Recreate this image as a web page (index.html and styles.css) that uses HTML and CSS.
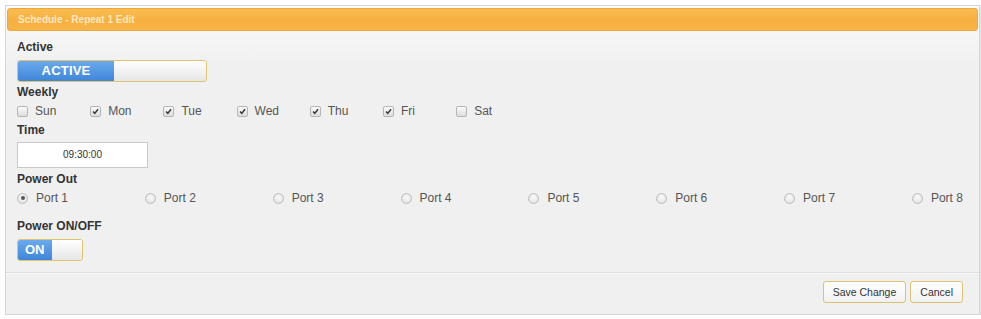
FILE: index.html
```html
<!DOCTYPE html>
<html>
<head>
<meta charset="utf-8">
<link rel="stylesheet" href="styles.css">
</head>
<body>
<div class="panel">
  <div class="header">Schedule - Repeat 1 Edit</div>
  <div class="body">
    <div class="label first">Active</div>
    <div class="toggle wide"><span class="on">ACTIVE</span><span class="off"></span></div>

    <div class="label weekly">Weekly</div>
    <div class="days">
      <label class="item"><span class="cb"></span>Sun</label>
      <label class="item"><span class="cb checked"><svg viewBox="0 0 11 11"><path d="M2.5 5.6 L4.6 7.8 L8.6 2.8" /></svg></span>Mon</label>
      <label class="item"><span class="cb checked"><svg viewBox="0 0 11 11"><path d="M2.5 5.6 L4.6 7.8 L8.6 2.8" /></svg></span>Tue</label>
      <label class="item"><span class="cb checked"><svg viewBox="0 0 11 11"><path d="M2.5 5.6 L4.6 7.8 L8.6 2.8" /></svg></span>Wed</label>
      <label class="item"><span class="cb checked"><svg viewBox="0 0 11 11"><path d="M2.5 5.6 L4.6 7.8 L8.6 2.8" /></svg></span>Thu</label>
      <label class="item"><span class="cb checked"><svg viewBox="0 0 11 11"><path d="M2.5 5.6 L4.6 7.8 L8.6 2.8" /></svg></span>Fri</label>
      <label class="item"><span class="cb"></span>Sat</label>
    </div>

    <div class="label timelabel">Time</div>
    <div class="time">09:30:00</div>

    <div class="label powerout">Power Out</div>
    <div class="ports">
      <label class="port"><span class="radio checked"></span>Port 1</label>
      <label class="port"><span class="radio"></span>Port 2</label>
      <label class="port"><span class="radio"></span>Port 3</label>
      <label class="port"><span class="radio"></span>Port 4</label>
      <label class="port"><span class="radio"></span>Port 5</label>
      <label class="port"><span class="radio"></span>Port 6</label>
      <label class="port"><span class="radio"></span>Port 7</label>
      <label class="port"><span class="radio"></span>Port 8</label>
    </div>

    <div class="label power">Power ON/OFF</div>
    <div class="toggle small"><span class="on">ON</span><span class="off"></span></div>
  </div>
  <div class="footer">
    <button class="btn">Save Change</button>
    <button class="btn">Cancel</button>
  </div>
</div>
</body>
</html>
```
FILE: styles.css
```css
html, body {
  margin: 0;
  padding: 0;
  background: #ffffff;
  font-family: "Liberation Sans", Arial, sans-serif;
}

.panel {
  margin: 5px 0 0 5px;
  width: 975px;
  height: 310px;
  border: 1px solid #d6d6d6;
  box-shadow: 1px 1px 2px rgba(0,0,0,0.15);
  background: linear-gradient(#fbfbfb 0px, #f0f0f0 60px, #f0f0f0 100%);
  display: flex;
  flex-direction: column;
  box-sizing: border-box;
}

.header {
  margin: 2px 1px 0 1px;
  height: 23px;
  box-sizing: border-box;
  border: 1px solid #eda83a;
  border-radius: 3px;
  background: linear-gradient(#f9bc50, #f6b040 55%, #f7b446);
  color: #fde8c0;
  font-family: "Liberation Sans", Arial, sans-serif;
  font-weight: bold;
  font-size: 10px;
  line-height: 21px;
  padding-left: 10px;
}

.body {
  padding: 0 16px 0 11px;
  flex: 1;
  border-bottom: 1px solid #dedede;
}

.label {
  font-weight: bold;
  font-size: 12px;
  line-height: 14px;
  color: #333;
  margin-top: 2px;
}

.label.first { margin-top: 9px; }
.label.weekly { margin-top: 3px; }
.label.timelabel { margin-top: 5px; }
.label.powerout { margin-top: 4px; }
.label.power { margin-top: 14px; }

.toggle {
  display: flex;
  height: 22px;
  box-sizing: border-box;
  border: 1px solid #e0c36a;
  border-radius: 3px;
  overflow: hidden;
  margin-top: 6px;
}
.toggle.wide { width: 190px; }
.toggle.small { width: 66px; margin-top: 6px; }

.toggle .on {
  background: linear-gradient(#6aa9ec, #3f86da);
  color: #fff;
  font-weight: bold;
  font-size: 13px;
  line-height: 20px;
  text-align: center;
}
.toggle.wide .on { width: 96px; letter-spacing: 0.2px; }
.toggle.small .on { width: 34px; text-align: left; padding-left: 7px; box-sizing: border-box; }

.toggle .off {
  flex: 1;
  background: linear-gradient(#ffffff, #e6e6e6);
}

.days {
  display: flex;
  margin-top: 5px;
  height: 14px;
  align-items: center;
}

.item {
  display: flex;
  align-items: center;
  width: 73.2px;
  font-size: 12px;
  color: #555;
}

.cb {
  width: 11px;
  height: 11px;
  box-sizing: border-box;
  border: 1px solid #b5b5b5;
  border-radius: 2px;
  background: linear-gradient(#fafafa, #dedede);
  margin: 0 7px 0 0;
  display: inline-flex;
}
.cb svg {
  width: 9px;
  height: 9px;
}
.cb svg path {
  fill: none;
  stroke: #3a3a3a;
  stroke-width: 1.9;
}

.time {
  margin-top: 5px;
  width: 131px;
  height: 26px;
  box-sizing: border-box;
  border: 1px solid #c8c8c8;
  background: #fff;
  text-align: center;
  font-family: "Liberation Sans", Arial, sans-serif;
  font-size: 10px;
  line-height: 24px;
  color: #333;
}

.ports {
  display: flex;
  justify-content: space-between;
  margin-top: 5px;
  height: 14px;
  align-items: center;
}

.port {
  display: flex;
  align-items: center;
  font-size: 12px;
  color: #555;
}

.radio {
  width: 11px;
  height: 11px;
  box-sizing: border-box;
  border: 1px solid #bdbdbd;
  border-radius: 50%;
  background: radial-gradient(circle at 50% 40%, #fafafa, #dcdcdc);
  margin-right: 8px;
  position: relative;
}
.radio.checked::after {
  content: "";
  position: absolute;
  left: 2.5px;
  top: 2.5px;
  width: 4px;
  height: 4px;
  border-radius: 50%;
  background: #555;
}

.footer {
  height: 41px;
  display: flex;
  justify-content: flex-end;
  align-items: flex-start;
  gap: 4px;
  padding: 7px 16px 0 0;
  box-sizing: border-box;
  border-top: 1px solid #fafafa;
}

.btn {
  height: 22px;
  padding: 0 9px;
  border: 1px solid #dcc16e;
  border-radius: 3px;
  background: linear-gradient(#ffffff, #f1f1f1);
  font-family: "Liberation Sans", Arial, sans-serif;
  font-size: 10.5px;
  color: #333;
}
```
